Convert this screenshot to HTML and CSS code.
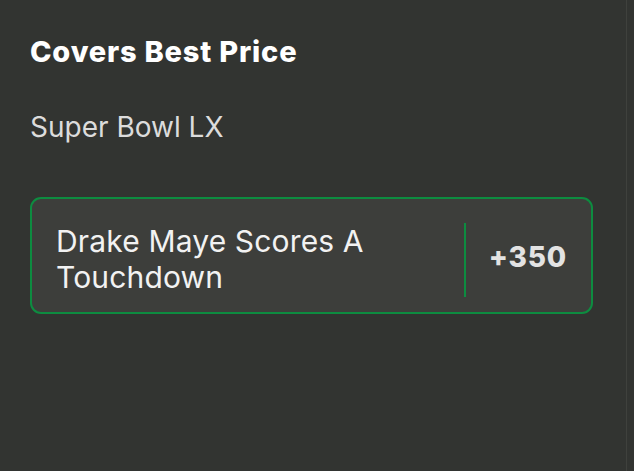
FILE: index.html
```html
<!DOCTYPE html>
<html lang="en">
<head>
<meta charset="utf-8">
<link rel="stylesheet" href="styles.css">
</head>
<body>
<div class="panel">
  <h2 class="title">Covers Best Price</h2>
  <p class="event">Super Bowl LX</p>
  <div class="bet">
    <div class="bet-name">Drake Maye Scores A Touchdown</div>
    <div class="divider"></div>
    <div class="bet-odds">+350</div>
  </div>
</div>
</body>
</html>
```

FILE: styles.css
```css
html, body {
  margin: 0;
  padding: 0;
  background: #323431;
  height: 100%;
}
body {
  font-family: Inter, "Noto Sans", sans-serif;
  overflow: hidden;
}
.panel {
  box-sizing: border-box;
  width: 627px;
  height: calc(100% + 20px);
  margin-top: -20px;
  padding: 56px 0 0 30px;
  border-right: 1px solid #3f413d;
  border-top-right-radius: 10px;
}
.title {
  margin: 0;
  font-size: 29px;
  font-weight: 800;
  line-height: 32px;
  color: #ffffff;
  letter-spacing: 0.8px;
}
.event {
  margin: 43px 0 0;
  font-size: 28px;
  font-weight: 400;
  line-height: 32px;
  color: #dcdcdc;
}
.bet {
  box-sizing: border-box;
  margin-top: 54px;
  width: 563px;
  height: 117px;
  display: flex;
  align-items: center;
  background: #3d3e3b;
  border: 2px solid #0d8c40;
  border-radius: 11px;
  padding: 0 24px 0 24px;
}
.bet-name {
  flex: 1;
  margin-top: 7px;
  font-size: 30px;
  line-height: 36px;
  letter-spacing: 0.15px;
  color: #f2f2f2;
}
.divider {
  width: 2px;
  height: 74px;
  background: #0d8c40;
  margin: 8px 23px 0 12px;
}
.bet-odds {
  margin-top: 3px;
  font-size: 28px;
  font-weight: 800;
  letter-spacing: 0.8px;
  color: #e3e3e3;
}
```
